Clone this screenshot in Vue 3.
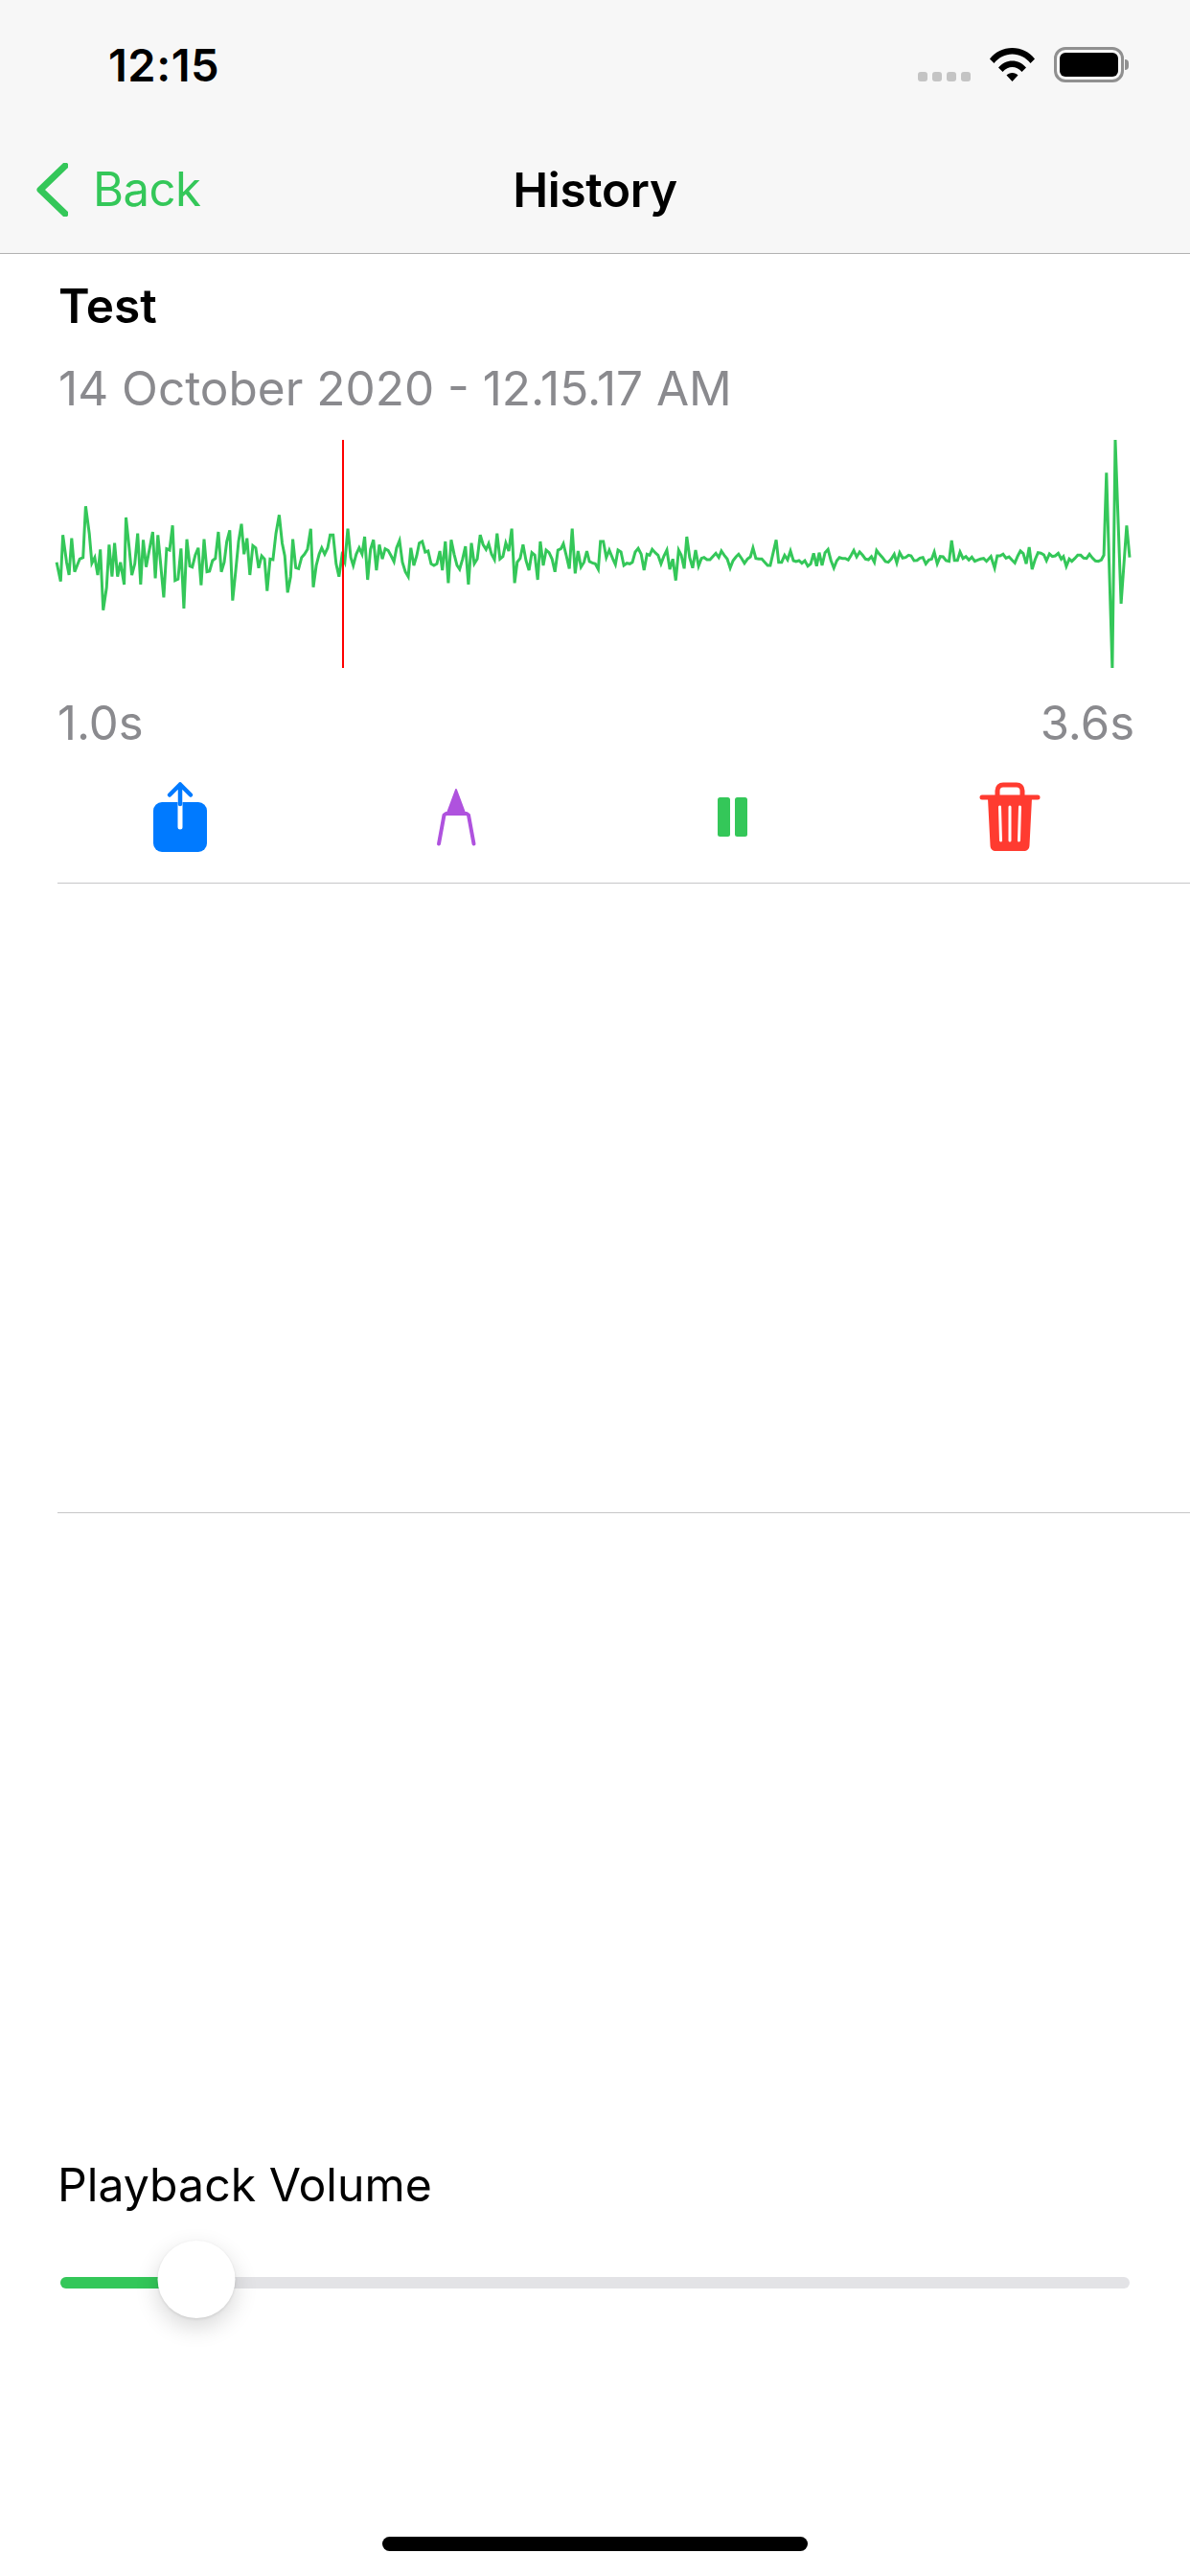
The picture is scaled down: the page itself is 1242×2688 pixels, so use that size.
<script setup>
import { computed, ref } from 'vue'

// samples read off the recording, in crop units: x / 2.613 + 40, y / 3 + 440
const firstHalf = [[50,440],[61,500],[67,355],[77,440],[84,480],[91,365],[99,470],[113,430],[122,425],[129,265],[139,350],[146,443],[154,425],[162,480],[169,400],[177,590],[186,520],[193,385],[201,485],[208,380],[216,485],[224,440],[234,510],[239,300],[247,385],[255,480],[263,445],[271,350],[279,510],[286,370],[294,455],[312,345],[319,490],[326,355],[334,450],[342,550],[350,398],[358,402],[366,325],[373,497],[381,493],[389,397],[397,585],[405,368],[413,452],[420,455],[428,418],[436,395],[444,512],[452,368],[460,470],[467,468],[475,435],[483,428],[491,345],[499,470],[507,440],[514,375],[522,340],[530,560],[538,470],[546,375],[554,320],[561,415],[569,365],[577,480],[585,388],[593,395],[601,458],[609,420],[617,430],[624,530],[632,430],[640,432],[648,350],[657,292],[665,380],[672,420],[680,535],[688,485],[694,368],[702,457],[710,460],[718,425],[726,415],[734,400],[743,335],[750,518],[758,450],[766,415],[773,395],[781,415],[789,395],[796,355],[804,355],[812,445],[820,485],[828,420],[836,440],[844,335],[852,425],[859,450],[867,415],[875,395],[883,415],[890,360],[898,495],[906,400],[914,370],[922,465],[930,385],[938,430],[946,398],[954,403],[962,420],[970,438],[977,395],[985,372],[993,440],[1001,470],[1009,485],[1016,395],[1024,450],[1032,420],[1039,380],[1047,375],[1055,408],[1063,405],[1071,445],[1079,450],[1087,445],[1095,405],[1102,465],[1110,375],[1118,505],[1126,370],[1134,415],[1142,450],[1149,462],[1157,430],[1165,390],[1173,510],[1181,380],[1189,445],[1197,430],[1205,355],[1213,385],[1221,400],[1228,382],[1236,415],[1244,432],[1251,350],[1259,430],[1267,422],[1275,380],[1283,405],[1291,335],[1299,505],[1306,440],[1314,428],[1322,385],[1330,435],[1338,465],[1346,410],[1354,418],[1362,495],[1369,375],[1377,450],[1385,402],[1393,410],[1401,430],[1409,470],[1417,402],[1425,398],[1432,382],[1440,420],[1448,460],[1456,335],[1464,475],[1472,405],[1480,455],[1488,440],[1496,405],[1503,438],[1511,442],[1519,445],[1527,462],[1533,375],[1541,375],[1549,425],[1557,402],[1567,430]]

// same again for the right part: x / 2.605 + 640, y / 3 + 440
const secondHalf = [[6,447],[13,402],[21,408],[29,450],[37,443],[45,445],[52,440],[60,408],[68,397],[76,415],[84,465],[92,415],[99,418],[106,400],[114,410],[122,418],[130,445],[138,420],[146,402],[154,462],[162,430],[170,497],[178,402],[185,418],[193,460],[200,360],[208,425],[216,458],[224,402],[232,452],[240,428],[247,425],[255,432],[263,432],[271,422],[279,412],[287,425],[294,405],[302,418],[310,430],[318,458],[326,435],[334,423],[341,415],[349,428],[357,443],[365,430],[373,423],[380,395],[388,428],[396,430],[404,430],[412,440],[420,450],[427,450],[435,410],[443,370],[450,440],[458,440],[466,418],[474,432],[482,405],[490,435],[497,438],[505,435],[513,443],[521,435],[529,452],[537,445],[545,412],[553,452],[560,410],[568,450],[576,410],[584,400],[592,435],[600,458],[608,435],[615,425],[623,428],[631,428],[639,433],[647,418],[654,403],[662,423],[670,408],[678,418],[686,430],[694,432],[702,422],[710,440],[716,403],[724,415],[732,425],[740,438],[748,440],[756,430],[764,415],[771,442],[779,410],[787,427],[795,425],[803,418],[810,420],[818,435],[826,434],[834,427],[842,425],[850,445],[858,433],[866,430],[873,408],[881,445],[889,422],[897,423],[905,435],[913,437],[920,372],[928,434],[936,434],[943,408],[951,428],[959,422],[967,433],[975,424],[983,437],[991,433],[999,430],[1007,428],[1015,437],[1027,422],[1037,458],[1044,420],[1052,420],[1060,415],[1068,427],[1076,423],[1084,433],[1092,442],[1100,420],[1107,405],[1115,413],[1123,445],[1131,393],[1139,462],[1147,432],[1155,410],[1163,412],[1171,417],[1178,435],[1186,414],[1194,422],[1202,420],[1210,412],[1218,430],[1224,422],[1232,453],[1240,430],[1247,437],[1255,428],[1263,418],[1271,418],[1279,427],[1287,428],[1295,415],[1303,427],[1311,436],[1319,437],[1327,433],[1334,418],[1341,160],[1357,775],[1365,57],[1381,570],[1396,325],[1404,425]]

const wavePoints = computed(() => {
  const left = firstHalf.map(([x, y]) => `${(x / 2.613 + 40).toFixed(1)},${(y / 3 + 440).toFixed(1)}`)
  const right = secondHalf.map(([x, y]) => `${(x / 2.605 + 640).toFixed(1)},${(y / 3 + 440).toFixed(1)}`)
  return left.concat(right).join(' ')
})

const volume = ref(0.127)
const sliderPercent = computed(() => `${volume.value * 100}%`)
</script>

<template>
  <div class="screen">
    <header class="bar">
      <div class="status">
        <span class="time">12:15</span>
        <div class="status-icons">
          <div class="signal"><i></i><i></i><i></i><i></i></div>
          <svg class="wifi" viewBox="0 0 47 36">
            <path d="M0 12.5C6 5 14 1 23.5 1S41 5 47 12.5L42.5 17C37.5 11 31 7.5 23.5 7.5S9.5 11 4.5 17Z" />
            <path d="M9 21.5C13 17 18 14.5 23.5 14.5S34 17 38 21.5L33.5 26C30.5 22.8 27 21 23.5 21S16.5 22.8 13.5 26Z" />
            <path d="M17.5 29.5C19 28 21 27 23.5 27S28 28 29.5 29.5L23.5 36Z" />
          </svg>
          <div class="battery"><div class="battery-level"></div></div>
          <div class="battery-nub"></div>
        </div>
      </div>
      <nav class="nav">
        <div class="back">
          <svg class="chevron" viewBox="0 0 33 56">
            <path d="M30 3 4 28l26 25" />
          </svg>
          <span>Back</span>
        </div>
        <h1 class="title">History</h1>
      </nav>
    </header>

    <main class="content">
      <section class="recording">
        <h2 class="name">Test</h2>
        <p class="date">14 October 2020 - 12.15.17 AM</p>
      </section>

      <svg class="wave" viewBox="0 459 1242 238">
        <polyline class="wave-line" :points="wavePoints" />
        <line class="wave-cursor" x1="358" y1="459" x2="358" y2="697" />
      </svg>

      <div class="range">
        <span>1.0s</span>
        <span>3.6s</span>
      </div>

      <div class="actions">
        <svg viewBox="0 0 100 100">
          <rect class="share-box" x="22" y="37" width="56" height="52" rx="9" />
          <path class="share-slot" d="M50 37v26" />
          <path class="share-arrow" d="M50 39V18.5M39 29.5 50 18.5l11 11" />
        </svg>
        <svg viewBox="0 0 100 100">
          <path class="compass-tip" d="M50 24 40.5 49.5H59.5Z" />
          <path class="compass-legs" d="M32 80.5 37.5 50.5 39.500 49H61L63 50.5 68.5 80.5" />
        </svg>
        <svg viewBox="0 0 100 100">
          <rect class="pause" x="35" y="32" width="13" height="41" rx="2.5" />
          <rect class="pause" x="53" y="32" width="13" height="41" rx="2.5" />
        </svg>
        <svg viewBox="0 0 100 100">
          <path class="trash-handle" d="M39 31v-6c0-4 2.5-6 6-6h14c3.5 0 6 2 6 6v6" />
          <path class="trash-lid" d="M23 32h58" />
          <path class="trash-body" d="M29 33h46l-2.5 49c-.2 4-2.500 6-6 6h-29c-3.500 0-5.800-2-6-6Z" />
          <path class="trash-slot" d="M41.5 42l1 35M52 42v35M62.5 42l-1 35" />
        </svg>
      </div>

      <div class="divider"></div>
      <div class="empty-list"></div>
      <div class="divider"></div>
    </main>

    <section class="playback">
      <label class="volume-label">Playback Volume</label>
      <div class="slider">
        <div class="track">
          <div class="track-fill" :style="{ width: sliderPercent }"></div>
        </div>
        <div class="thumb" :style="{ left: sliderPercent }"></div>
      </div>
    </section>

    <div class="home-area"><div class="home-indicator"></div></div>
  </div>
</template>

<style>
html,
body {
  margin: 0;
  background: #fff;
}
</style>

<style scoped>
.screen {
  width: 1242px;
  height: 2688px;
  display: flex;
  flex-direction: column;
  overflow: hidden;
  background: #fff;
  color: #000;
  font-family: Inter, "Liberation Sans", sans-serif;
}
.bar {
  height: 264px;
  background: #f7f7f7;
  border-bottom: 1px solid #b2b2b2;
}
.status {
  height: 132px;
  display: flex;
  justify-content: space-between;
  padding: 0 64px 0 113px;
  box-sizing: border-box;
}
.time {
  font-size: 47px;
  font-weight: 600;
  letter-spacing: 0.5px;
  line-height: 50px;
  margin-top: 43px;
}
.status-icons {
  display: flex;
  align-items: flex-start;
  padding-top: 49px;
}
.signal {
  display: flex;
  gap: 5px;
  margin-top: 26px;
  margin-right: 20px;
}
.signal i {
  display: block;
  width: 10px;
  height: 10px;
  border-radius: 3px;
  background: #c4c4c4;
}
.wifi {
  width: 47px;
  height: 36px;
  margin-right: 20px;
  fill: #000;
}
.battery {
  width: 73px;
  height: 37px;
  box-sizing: border-box;
  border: 3px solid #909090;
  border-radius: 12px;
  padding: 3px;
}
.battery-level {
  height: 100%;
  background: #000;
  border-radius: 6px;
}
.battery-nub {
  width: 4px;
  height: 11px;
  margin: 13px 0 0 1px;
  background: #909090;
  border-radius: 0 4px 4px 0;
}
.nav {
  height: 132px;
  position: relative;
  display: flex;
  align-items: center;
  justify-content: center;
}
.back {
  position: absolute;
  left: 38px;
  top: 38px;
  display: flex;
  align-items: center;
  gap: 26px;
  color: #34c759;
  font-size: 49px;
  letter-spacing: -0.5px;
  line-height: 56px;
}
.chevron {
  width: 33px;
  height: 56px;
  fill: none;
  stroke: #34c759;
  stroke-width: 7;
  stroke-linecap: round;
  stroke-linejoin: round;
}
.title {
  margin: 0;
  font-size: 49.5px;
  font-weight: 600;
  letter-spacing: -0.3px;
  line-height: 60px;
}
.content {
  display: flex;
  flex-direction: column;
}
.recording {
  padding: 24px 0 0 61px;
  height: 194px;
  box-sizing: border-box;
}
.name {
  margin: 0;
  font-size: 49.5px;
  font-weight: 600;
  line-height: 60px;
}
.date {
  margin: 26px 0 0;
  font-size: 49.5px;
  font-weight: 400;
  line-height: 60px;
  color: #8a8a8e;
}
.wave {
  display: block;
  width: 1242px;
  height: 238px;
}
.wave-line {
  fill: none;
  stroke: #34c759;
  stroke-width: 3;
}
.wave-cursor {
  stroke: #ff0000;
  stroke-width: 2;
}
.range {
  display: flex;
  justify-content: space-between;
  padding: 28px 58px 0 60px;
  font-size: 49px;
  line-height: 60px;
  color: #8a8a8e;
}
.actions {
  display: grid;
  grid-template-columns: repeat(4, 100px);
  column-gap: 188px;
  margin: 15px 0 0 138px;
  height: 121px;
}
.actions svg {
  display: block;
  width: 100px;
  height: 100px;
  fill: none;
}
.share-box {
  fill: #007aff;
  stroke: none;
}
.share-slot {
  stroke: #fff;
  stroke-width: 5;
  stroke-linecap: round;
}
.share-arrow {
  stroke: #007aff;
  stroke-width: 4.5;
  stroke-linecap: round;
  stroke-linejoin: round;
}
.compass-tip {
  fill: #af52de;
  stroke: #af52de;
  stroke-width: 2;
  stroke-linejoin: round;
}
.compass-legs {
  fill: none;
  stroke: #af52de;
  stroke-width: 4;
  stroke-linecap: round;
  stroke-linejoin: round;
}
.pause {
  fill: #34c759;
}
.trash-handle {
  stroke: #ff3b30;
  stroke-width: 5;
}
.trash-lid {
  stroke: #ff3b30;
  stroke-width: 5;
  stroke-linecap: round;
}
.trash-body {
  fill: #ff3b30;
}
.trash-slot {
  stroke: #fff;
  stroke-width: 3;
  stroke-linecap: round;
}
.divider {
  height: 1px;
  margin-left: 60px;
  background: #c6c6c8;
}
.empty-list {
  height: 656px;
}
.playback {
  padding: 0 63px;
  flex: 1;
  display: flex;
  flex-direction: column;
  justify-content: flex-end;
}
.volume-label {
  display: block;
  margin-left: -3px;
  font-size: 48.2px;
  line-height: 60px;
}
.slider {
  position: relative;
  height: 81px;
  margin-top: 28px;
  margin-bottom: 228px;
  display: flex;
  align-items: center;
}
.track {
  flex: 1;
  height: 12px;
  border-radius: 6px;
  background: #e3e3e6;
  overflow: hidden;
  margin-top: 7px;
}
.track-fill {
  height: 100%;
  background: #34c759;
}
.thumb {
  position: absolute;
  top: 0;
  width: 81px;
  height: 81px;
  border-radius: 50%;
  transform: translateX(-50%);
  background: #fff;
  box-shadow: 0 9px 24px rgba(0, 0, 0, 0.16), 0 1px 3px rgba(0, 0, 0, 0.1);
}
.home-area {
  height: 41px;
  display: flex;
  justify-content: center;
}
.home-indicator {
  width: 444px;
  height: 15px;
  border-radius: 8px;
  background: #000;
}
</style>
